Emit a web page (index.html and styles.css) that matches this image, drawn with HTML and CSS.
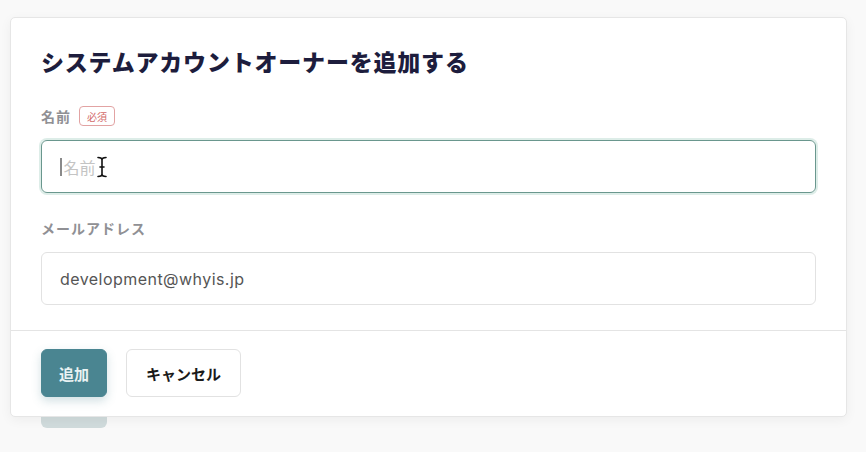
FILE: index.html
```html
<!DOCTYPE html>
<html lang="ja">
<head>
<meta charset="utf-8">
<title>システムアカウントオーナーを追加する</title>
<link rel="stylesheet" href="styles.css">
</head>
<body>
<div class="page">
  <div class="card">
    <div class="card-body">
      <h1 class="title">システムアカウントオーナーを追加する</h1>
      <div class="field">
        <div class="label-row">
          <span class="label">名前</span>
          <span class="badge">必須</span>
        </div>
        <div class="input input-focus">
          <span class="caret"></span>
          <span class="placeholder">名前</span>
          <svg class="ibeam" width="10" height="22" viewBox="0 0 10 22" aria-hidden="true">
            <path d="M1 1.5 Q5 1.5 5 4 Q5 1.5 9 1.5 M5 4 V18 M1 20.5 Q5 20.5 5 18 Q5 20.5 9 20.5 M3 11 H7" fill="none" stroke="#111" stroke-width="1.6" stroke-linecap="round"/>
          </svg>
        </div>
      </div>
      <div class="field">
        <div class="label-row">
          <span class="label">メールアドレス</span>
        </div>
        <div class="input">
          <span class="value">development@whyis.jp</span>
        </div>
      </div>
    </div>
    <div class="card-footer">
      <button class="btn btn-primary" type="button">追加</button>
      <button class="btn btn-default" type="button">キャンセル</button>
    </div>
  </div>
  <div class="ghost"></div>
</div>
</body>
</html>
```
FILE: styles.css
```css
html, body {
  margin: 0;
  padding: 0;
}
body {
  background: #f9f9f9;
  font-family: Inter, "Noto Sans CJK JP", "Noto Sans", sans-serif;
  width: 866px;
  height: 452px;
  overflow: hidden;
}
.page {
  padding: 17px 0 0 10px;
}
.card {
  width: 835px;
  height: 398px;
  background: #ffffff;
  border: 1px solid #e6e6e6;
  border-radius: 5px;
  box-shadow: 0 3px 12px rgba(0, 0, 0, 0.05);
  display: flex;
  flex-direction: column;
  position: relative;
  z-index: 1;
}
.card-body {
  padding: 30px 30px 0 30px;
  height: 282px;
  border-bottom: 1px solid #e4e4e4;
}
.title {
  margin: 0;
  font-size: 23px;
  line-height: 30px;
  font-weight: 800;
  letter-spacing: 0.8px;
  color: #1d1d3d;
}
.field {
  margin-top: 27px;
}
.field + .field {
  margin-top: 24px;
}
.label-row {
  display: flex;
  align-items: center;
  gap: 8px;
  height: 22px;
}
.label {
  font-size: 14px;
  font-weight: 700;
  letter-spacing: 1px;
  color: #909094;
}
.badge {
  display: inline-flex;
  align-items: center;
  height: 20px;
  padding: 0 7px;
  border: 1px solid #e2a3a3;
  border-radius: 4px;
  font-size: 10px;
  color: #d26b6b;
  box-sizing: border-box;
}
.input {
  margin-top: 13px;
  height: 53px;
  box-sizing: border-box;
  border: 1px solid #e2e2e2;
  border-radius: 6px;
  display: flex;
  align-items: center;
  padding: 0 18px;
  position: relative;
  font-size: 16px;
}
.input-focus {
  border: 1.5px solid #6a978e;
  box-shadow: 0 0 0 2px rgba(180, 215, 205, 0.45);
}
.caret {
  width: 1.5px;
  height: 18px;
  background: #8a8a8a;
  margin-right: 2px;
}
.placeholder {
  color: #c4c4c4;
}
.ibeam {
  position: absolute;
  left: 55px;
  top: 15px;
}
.value {
  color: #555555;
  letter-spacing: 0.45px;
}
.card-footer {
  display: flex;
  align-items: center;
  gap: 19px;
  padding: 18px 30px 0 30px;
}
.btn {
  height: 48px;
  box-sizing: border-box;
  padding: 0 17px;
  border-radius: 6px;
  font-family: inherit;
  font-size: 15px;
  font-weight: 700;
  cursor: pointer;
}
.btn-primary {
  background: #4a8591;
  border: 1px solid #4a8591;
  color: #e9f2f3;
  box-shadow: 0 4px 10px rgba(74, 133, 145, 0.25);
}
.btn-default {
  background: #ffffff;
  border: 1px solid #e2e2e2;
  color: #1a1a1a;
  padding: 0 19px;
}
.ghost {
  margin-left: 31px;
  width: 66px;
  height: 11px;
  background: #d0dbdc;
  border-radius: 0 0 6px 6px;
}
```
